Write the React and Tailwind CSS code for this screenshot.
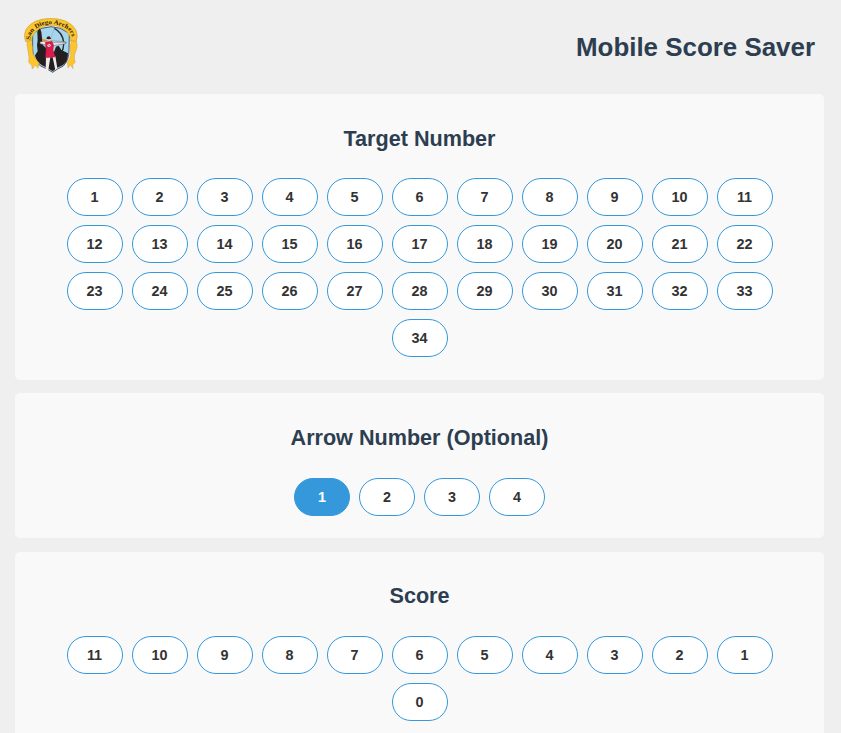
import React, { useState } from "react";

const targets = Array.from({ length: 34 }, (_, i) => i + 1);
const arrows = [1, 2, 3, 4];
const scores = [11, 10, 9, 8, 7, 6, 5, 4, 3, 2, 1, 0];

function Logo() {
  return (
    <svg className="w-[56px] h-[58px]" viewBox="21 24 168 174" role="img" aria-label="San Diego Archers">
      {/* shield */}
      <path
        d="M50 70 Q105 30 160 70 L159 118 Q160 150 142 168 Q124 176 110 187 Q94 176 74 168 Q50 150 50 120 Z"
        fill="#a5d6ee"
        stroke="#55565a"
        strokeWidth="3"
      />
      {/* skyline and hills */}
      <path
        d="M57 136 L65 124 L63 106 L65 90 L64 66 L71 52 L76 66 L79 92 L81 106 L88 112 L94 122 L114 126 L120 110 L128 107 L136 120 L144 124 L156 130 Q156 156 140 166 Q122 172 110 184 Q96 174 78 166 Q60 156 57 136 Z"
        fill="#231f20"
      />
      {/* side ribbons */}
      <path
        d="M34 84 L48 90 L46 98 Q52 110 50 128 Q58 148 69 158 L66 175 L58 165 L49 177 L47 166 L38 157 Q41 142 36 124 Q31 106 34 84 Z"
        fill="#fdc52a"
        stroke="#a08a50"
        strokeWidth="1"
      />
      <path
        d="M178 84 L163 90 L165 98 Q160 110 164 126 Q166 142 154 157 L156 174 L163 164 L171 176 L170 164 L178 157 Q171 142 181 120 Q187 106 178 84 Z"
        fill="#fdc52a"
        stroke="#a08a50"
        strokeWidth="1"
      />
      {/* top banner */}
      <path
        d="M29 95 Q21 78 29 60 Q48 26 105 25 Q160 26 180 60 Q188 78 180 95 L165 91 Q163 76 152 65 Q134 47 105 46 Q76 47 60 65 Q48 76 46 91 Z"
        fill="#fdc52a"
        stroke="#a08a50"
        strokeWidth="1.2"
      />
      <path id="banner-line" d="M43 90 Q42 72 57 59 Q76 43 105 42 Q134 43 155 59 Q169 72 168 92" fill="none" />
      <text
        className="font-['Liberation_Serif',serif] font-bold"
        fontSize="19"
        fill="#2b2410"
        textLength="166"
        lengthAdjust="spacingAndGlyphs"
      >
        <textPath href="#banner-line">San Diego Archers</textPath>
      </text>
      {/* bow, string and arrow */}
      <path d="M115 55 Q140 68 143 97 Q144 116 134 132" fill="none" stroke="#25272d" strokeWidth="4" />
      <path d="M115 55 L100 98" fill="none" stroke="#7b8a90" strokeWidth="1" />
      {/* archer */}
      <path d="M90 140 L89 180 H97 L103 142 L110 142 L118 180 L124 175 L118 138 Z" fill="#f1ebe8" />
      <path d="M72 96 L90 92 L148 95 L149 101 L112 107 L92 106 L72 101 Z" fill="#ece9ea" stroke="#55565a" strokeWidth="1.5" />
      <path d="M94 98 H152" stroke="#383838" strokeWidth="1.2" />
      <circle cx="99" cy="88" r="6" fill="#efc9a0" />
      <path d="M91 86 Q92 79 100 79 L106 86 L98 88 Z" fill="#2b1a1c" />
      <path d="M78 86 L92 90 L90 95 L78 93 Z" fill="#e88a2c" />
      <path d="M88 96 L108 94 L113 106 L111 120 L118 141 L88 143 L90 120 Z" fill="#dc1a4b" stroke="#8d1736" strokeWidth="1" />
      <circle cx="99" cy="106" r="5" fill="#f2dfdf" />
      <path d="M96 103 L102 109" stroke="#231f20" strokeWidth="2" />
    </svg>
  );
}

function NumberButton({ value, active, onClick }) {
  return (
    <button
      type="button"
      onClick={onClick}
      className={`w-14 h-[38px] rounded-[20px] border border-[#3498db] pt-[1.8px] text-[14.4px] font-bold cursor-pointer ${
        active ? "bg-[#3498db] text-white" : "bg-white text-[#333]"
      }`}
    >
      {value}
    </button>
  );
}

function Section({ title, values, selected, onSelect }) {
  return (
    <section className="rounded-[5px] bg-[#f9f9f9] px-5 pt-[29.6px] pb-[22.7px]">
      <h2 className="mb-[24.6px] h-[30px] text-center text-[21.6px] leading-[30px] font-bold">{title}</h2>
      <div className="flex flex-wrap justify-center gap-[9px]">
        {values.map((value) => (
          <NumberButton
            key={value}
            value={value}
            active={selected === value}
            onClick={() => onSelect(value)}
          />
        ))}
      </div>
    </section>
  );
}

export default function App() {
  const [target, setTarget] = useState(null);
  const [arrow, setArrow] = useState(1);
  const [score, setScore] = useState(null);

  return (
    <div className="h-screen overflow-hidden bg-[#efefef] pl-[15px] pr-[17px] font-['Liberation_Sans',Arial,sans-serif] text-[#2c3e50]">
      <header className="flex h-[94px] items-center justify-between pl-2 pr-[9px]">
        <Logo />
        <h1 className="text-[25.92px] font-bold">Mobile Score Saver</h1>
      </header>
      <main className="flex flex-col gap-[13.5px]">
        <Section title="Target Number" values={targets} selected={target} onSelect={setTarget} />
        <Section title="Arrow Number (Optional)" values={arrows} selected={arrow} onSelect={setArrow} />
        <Section title="Score" values={scores} selected={score} onSelect={setScore} />
      </main>
    </div>
  );
}
